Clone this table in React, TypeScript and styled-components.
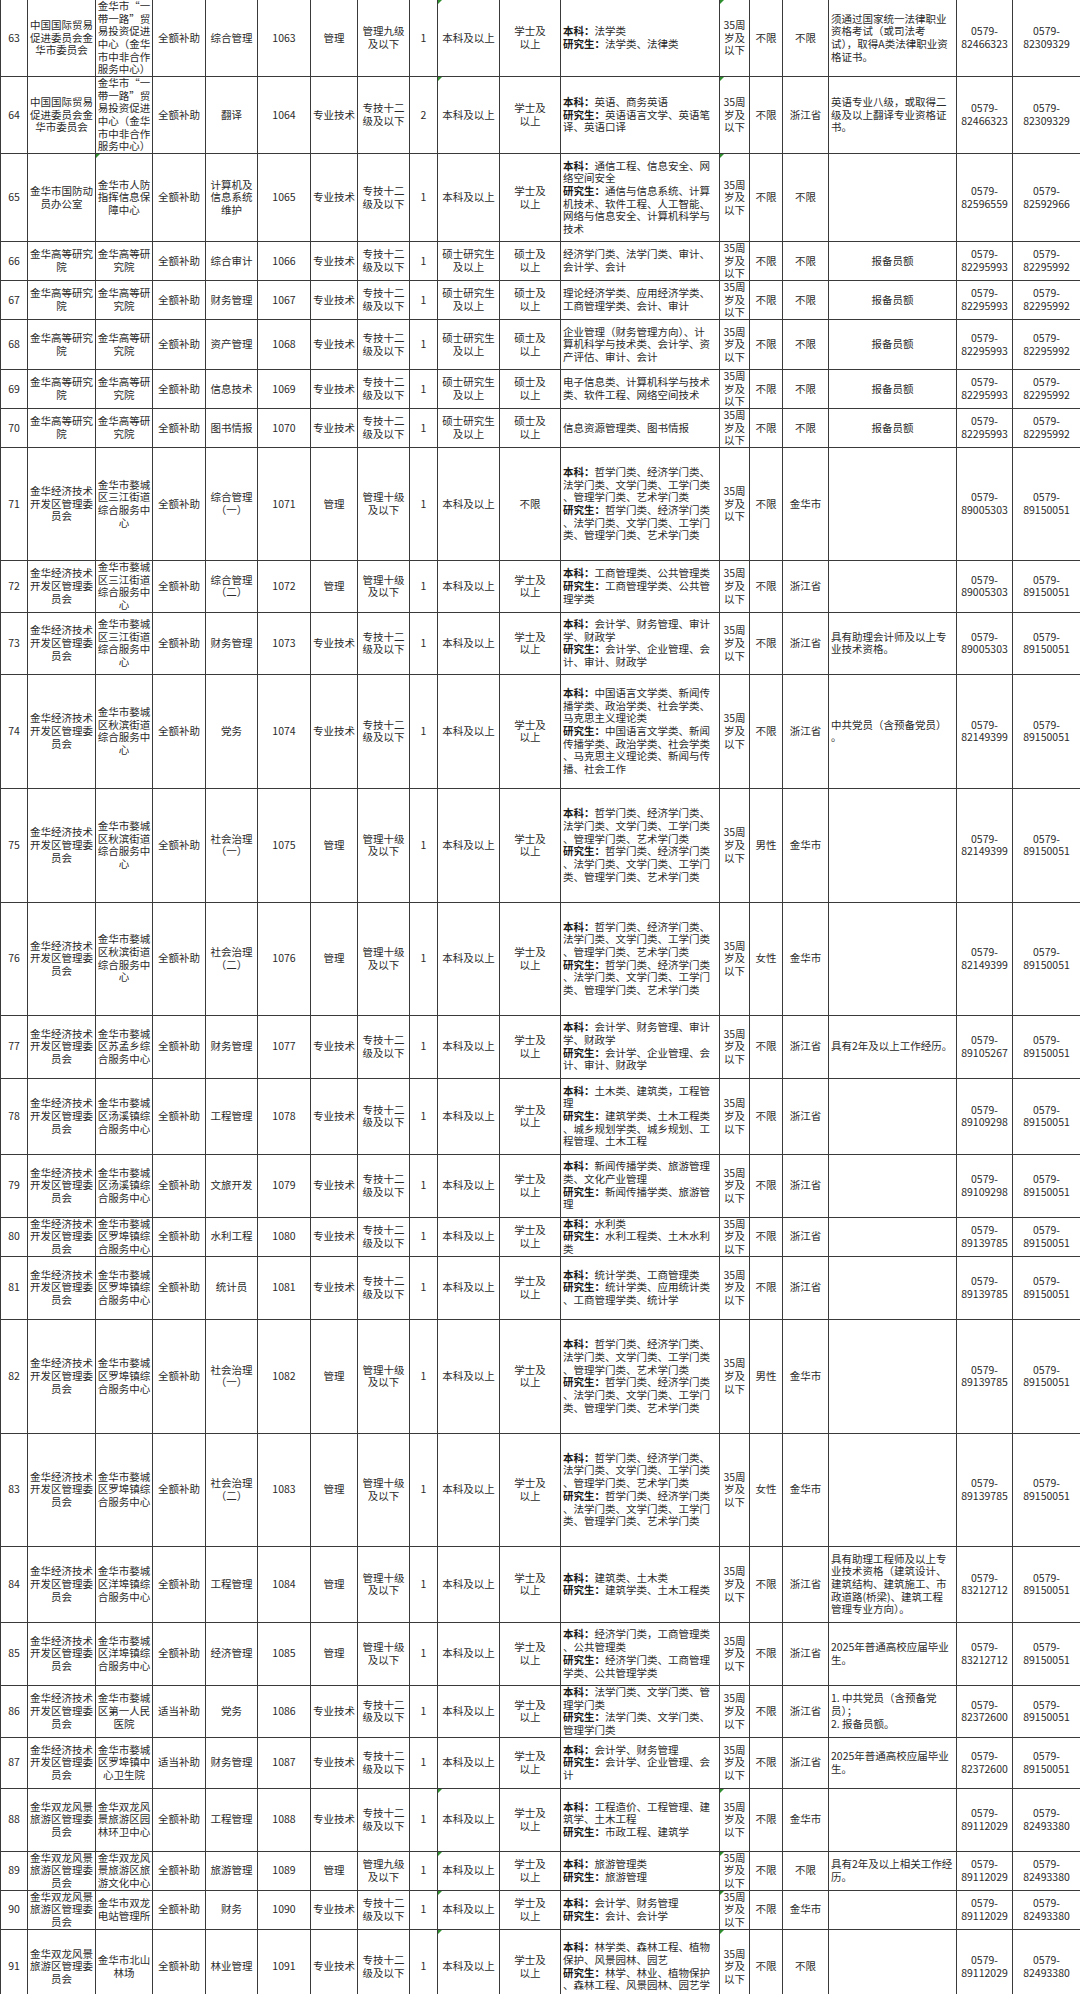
import React from 'react'
import styled, { createGlobalStyle } from 'styled-components'

const GlobalStyle = createGlobalStyle`
  html, body {
    margin: 0;
    padding: 0;
    background: #ffffff;
  }
  body {
    font-family: "Noto Sans CJK SC", "Noto Sans", sans-serif;
  }
`

const Sheet = styled.table`
  width: 1080px;
  table-layout: fixed;
  border-collapse: collapse;
  color: #2a2a2a;
  font-size: 10.5px;
  line-height: 12.67px;
`

type RowProps = { $h: number }

const Row = styled.tr<RowProps>`
  height: ${({ $h }: RowProps) => $h}px;
`

type CellProps = {
  $align: string
  $flag?: boolean
  $top?: boolean
}

const Cell = styled.td<CellProps>`
  position: relative;
  padding: ${({ $align }: CellProps) => ($align === 'left' ? '0 0 0 2px' : '0')};
  border: 1px solid #3a3a3a;
  ${({ $top }: CellProps) => $top && 'border-top: none;'}
  text-align: ${({ $align }: CellProps) => $align};
  vertical-align: middle;
  white-space: pre;

  &::before {
    content: '';
    display: ${({ $flag }: CellProps) => ($flag ? 'block' : 'none')};
    position: absolute;
    left: 0;
    top: 0;
    border-top: 4px solid #2f8f2f;
    border-right: 4px solid transparent;
  }
`

const Label = styled.b`
  font-weight: 700;
  color: #1a1a1a;
`

const widths = [27, 68, 57, 53, 52, 53, 47, 52, 28, 62, 61, 159, 30, 33, 46, 128, 56, 68]

const ORG_TRADE = '中国国际贸易\n促进委员会金\n华市委员会'
const UNIT_BR = '金华市“一\n带一路”贸\n易投资促进\n中心（金华\n市中非合作\n服务中心）'
const ORG_JH = '金华经济技术\n开发区管理委\n员会'
const ORG_SL = '金华双龙风景\n旅游区管理委\n员会'
const IAS = '金华高等研究\n院'
const IAS_U = '金华高等研\n究院'
const SJ = '金华市婺城\n区三江街道\n综合服务中\n心'
const QB = '金华市婺城\n区秋滨街道\n综合服务中\n心'
const SM = '金华市婺城\n区苏孟乡综\n合服务中心'
const TX = '金华市婺城\n区汤溪镇综\n合服务中心'
const LB = '金华市婺城\n区罗埠镇综\n合服务中心'
const YB = '金华市婺城\n区洋埠镇综\n合服务中心'
const AGE = '35周\n岁及\n以下'
const LV12 = '专技十二\n级及以下'
const LV10 = '管理十级\n及以下'
const LV9 = '管理九级\n及以下'
const BK = '本科及以上'
const XS = '学士及\n以上'
const SS = '硕士研究生\n及以上'
const SD = '硕士及\n以上'
const FULL = '全额补助'
const PART = '适当补助'
const TECH = '专业技术'
const MGMT = '管理'
const MAJ_ALL =
  '本科：哲学门类、经济学门类、\n法学门类、文学门类、工学门类\n、管理学门类、艺术学门类\n研究生：哲学门类、经济学门类\n、法学门类、文学门类、工学门\n类、管理学门类、艺术学门类'
const MAJ_ACC = '本科：会计学、财务管理、审计\n学、财政学\n研究生：会计学、企业管理、会\n计、审计、财政学'

const tel = (n: string) => `0579-\n${n}`

type Post = {
  h: number
  cells: string[]
  flags?: number[]
}

const posts: Post[] = [
  {
    h: 76, flags: [9, 12],
    cells: ['63', ORG_TRADE, UNIT_BR, FULL, '综合管理', '1063', MGMT, LV9, '1', BK, XS,
      '本科：法学类\n研究生：法学类、法律类', AGE, '不限', '不限',
      '须通过国家统一法律职业\n资格考试（或司法考\n试），取得A类法律职业资\n格证书。', tel('82466323'), tel('82309329')],
  },
  {
    h: 76, flags: [9, 12],
    cells: ['64', ORG_TRADE, UNIT_BR, FULL, '翻译', '1064', TECH, LV12, '2', BK, XS,
      '本科：英语、商务英语\n研究生：英语语言文学、英语笔\n译、英语口译', AGE, '不限', '浙江省',
      '英语专业八级，或取得二\n级及以上翻译专业资格证\n书。', tel('82466323'), tel('82309329')],
  },
  {
    h: 88, flags: [2, 12],
    cells: ['65', '金华市国防动\n员办公室', '金华市人防\n指挥信息保\n障中心', FULL, '计算机及\n信息系统\n维护', '1065', TECH, LV12, '1', BK, XS,
      '本科：通信工程、信息安全、网\n络空间安全\n研究生：通信与信息系统、计算\n机技术、软件工程、人工智能、\n网络与信息安全、计算机科学与\n技术',
      AGE, '不限', '不限', '', tel('82596559'), tel('82592966')],
  },
  {
    h: 38,
    cells: ['66', IAS, IAS_U, FULL, '综合审计', '1066', TECH, LV12, '1', SS, SD,
      '经济学门类、法学门类、审计、\n会计学、会计', AGE, '不限', '不限', '报备员额', tel('82295993'), tel('82295992')],
  },
  {
    h: 38,
    cells: ['67', IAS, IAS_U, FULL, '财务管理', '1067', TECH, LV12, '1', SS, SD,
      '理论经济学类、应用经济学类、\n工商管理学类、会计、审计', AGE, '不限', '不限', '报备员额', tel('82295993'), tel('82295992')],
  },
  {
    h: 50,
    cells: ['68', IAS, IAS_U, FULL, '资产管理', '1068', TECH, LV12, '1', SS, SD,
      '企业管理（财务管理方向）、计\n算机科学与技术类、会计学、资\n产评估、审计、会计', AGE, '不限', '不限', '报备员额', tel('82295993'), tel('82295992')],
  },
  {
    h: 38,
    cells: ['69', IAS, IAS_U, FULL, '信息技术', '1069', TECH, LV12, '1', SS, SD,
      '电子信息类、计算机科学与技术\n类、软件工程、网络空间技术', AGE, '不限', '不限', '报备员额', tel('82295993'), tel('82295992')],
  },
  {
    h: 38,
    cells: ['70', IAS, IAS_U, FULL, '图书情报', '1070', TECH, LV12, '1', SS, SD,
      '信息资源管理类、图书情报', AGE, '不限', '不限', '报备员额', tel('82295993'), tel('82295992')],
  },
  {
    h: 113,
    cells: ['71', ORG_JH, SJ, FULL, '综合管理\n（一）', '1071', MGMT, LV10, '1', BK, '不限',
      MAJ_ALL, AGE, '不限', '金华市', '', tel('89005303'), tel('89150051')],
  },
  {
    h: 51,
    cells: ['72', ORG_JH, SJ, FULL, '综合管理\n（二）', '1072', MGMT, LV10, '1', BK, XS,
      '本科：工商管理类、公共管理类\n研究生：工商管理学类、公共管\n理学类', AGE, '不限', '浙江省', '', tel('89005303'), tel('89150051')],
  },
  {
    h: 62,
    cells: ['73', ORG_JH, SJ, FULL, '财务管理', '1073', TECH, LV12, '1', BK, XS,
      MAJ_ACC, AGE, '不限', '浙江省', '具有助理会计师及以上专\n业技术资格。', tel('89005303'), tel('89150051')],
  },
  {
    h: 114,
    cells: ['74', ORG_JH, QB, FULL, '党务', '1074', TECH, LV12, '1', BK, XS,
      '本科：中国语言文学类、新闻传\n播学类、政治学类、社会学类、\n马克思主义理论类\n研究生：中国语言文学类、新闻\n传播学类、政治学类、社会学类\n、马克思主义理论类、新闻与传\n播、社会工作',
      AGE, '不限', '浙江省', '中共党员（含预备党员）\n。', tel('82149399'), tel('89150051')],
  },
  {
    h: 114,
    cells: ['75', ORG_JH, QB, FULL, '社会治理\n（一）', '1075', MGMT, LV10, '1', BK, XS,
      MAJ_ALL, AGE, '男性', '金华市', '', tel('82149399'), tel('89150051')],
  },
  {
    h: 113,
    cells: ['76', ORG_JH, QB, FULL, '社会治理\n（二）', '1076', MGMT, LV10, '1', BK, XS,
      MAJ_ALL, AGE, '女性', '金华市', '', tel('82149399'), tel('89150051')],
  },
  {
    h: 63,
    cells: ['77', ORG_JH, SM, FULL, '财务管理', '1077', TECH, LV12, '1', BK, XS,
      MAJ_ACC, AGE, '不限', '浙江省', '具有2年及以上工作经历。', tel('89105267'), tel('89150051')],
  },
  {
    h: 76,
    cells: ['78', ORG_JH, TX, FULL, '工程管理', '1078', TECH, LV12, '1', BK, XS,
      '本科：土木类、建筑类，工程管\n理\n研究生：建筑学类、土木工程类\n、城乡规划学类、城乡规划、工\n程管理、土木工程',
      AGE, '不限', '浙江省', '', tel('89109298'), tel('89150051')],
  },
  {
    h: 63,
    cells: ['79', ORG_JH, TX, FULL, '文旅开发', '1079', TECH, LV12, '1', BK, XS,
      '本科：新闻传播学类、旅游管理\n类、文化产业管理\n研究生：新闻传播学类、旅游管\n理',
      AGE, '不限', '浙江省', '', tel('89109298'), tel('89150051')],
  },
  {
    h: 38,
    cells: ['80', ORG_JH, LB, FULL, '水利工程', '1080', TECH, LV12, '1', BK, XS,
      '本科：水利类\n研究生：水利工程类、土木水利\n类', AGE, '不限', '浙江省', '', tel('89139785'), tel('89150051')],
  },
  {
    h: 63,
    cells: ['81', ORG_JH, LB, FULL, '统计员', '1081', TECH, LV12, '1', BK, XS,
      '本科：统计学类、工商管理类\n研究生：统计学类、应用统计类\n、工商管理学类、统计学', AGE, '不限', '浙江省', '', tel('89139785'), tel('89150051')],
  },
  {
    h: 114,
    cells: ['82', ORG_JH, LB, FULL, '社会治理\n（一）', '1082', MGMT, LV10, '1', BK, XS,
      MAJ_ALL, AGE, '男性', '金华市', '', tel('89139785'), tel('89150051')],
  },
  {
    h: 113,
    cells: ['83', ORG_JH, LB, FULL, '社会治理\n（二）', '1083', MGMT, LV10, '1', BK, XS,
      MAJ_ALL, AGE, '女性', '金华市', '', tel('89139785'), tel('89150051')],
  },
  {
    h: 76,
    cells: ['84', ORG_JH, YB, FULL, '工程管理', '1084', MGMT, LV10, '1', BK, XS,
      '本科：建筑类、土木类\n研究生：建筑学类、土木工程类', AGE, '不限', '浙江省',
      '具有助理工程师及以上专\n业技术资格（建筑设计、\n建筑结构、建筑施工、市\n政道路(桥梁)、建筑工程\n管理专业方向）。', tel('83212712'), tel('89150051')],
  },
  {
    h: 63,
    cells: ['85', ORG_JH, YB, FULL, '经济管理', '1085', MGMT, LV10, '1', BK, XS,
      '本科：经济学门类，工商管理类\n、公共管理类\n研究生：经济学门类、工商管理\n学类、公共管理学类',
      AGE, '不限', '浙江省', '2025年普通高校应届毕业\n生。', tel('83212712'), tel('89150051')],
  },
  {
    h: 50,
    cells: ['86', ORG_JH, '金华市婺城\n区第一人民\n医院', PART, '党务', '1086', TECH, LV12, '1', BK, XS,
      '本科：法学门类、文学门类、管\n理学门类\n研究生：法学门类、文学门类、\n管理学门类',
      AGE, '不限', '浙江省', '1. 中共党员（含预备党\n员）；\n2. 报备员额。', tel('82372600'), tel('89150051')],
  },
  {
    h: 51,
    cells: ['87', ORG_JH, '金华市婺城\n区罗埠镇中\n心卫生院', PART, '财务管理', '1087', TECH, LV12, '1', BK, XS,
      '本科：会计学、财务管理\n研究生：会计学、企业管理、会\n计', AGE, '不限', '浙江省',
      '2025年普通高校应届毕业\n生。', tel('82372600'), tel('89150051')],
  },
  {
    h: 63, flags: [9, 12],
    cells: ['88', ORG_SL, '金华双龙风\n景旅游区园\n林环卫中心', FULL, '工程管理', '1088', TECH, LV12, '1', BK, XS,
      '本科：工程造价、工程管理、建\n筑学、土木工程\n研究生：市政工程、建筑学', AGE, '不限', '金华市', '', tel('89112029'), tel('82493380')],
  },
  {
    h: 38, flags: [9, 12],
    cells: ['89', ORG_SL, '金华双龙风\n景旅游区旅\n游文化中心', FULL, '旅游管理', '1089', MGMT, LV9, '1', BK, XS,
      '本科：旅游管理类\n研究生：旅游管理', AGE, '不限', '不限',
      '具有2年及以上相关工作经\n历。', tel('89112029'), tel('82493380')],
  },
  {
    h: 38, flags: [9, 12],
    cells: ['90', ORG_SL, '金华市双龙\n电站管理所', FULL, '财务', '1090', TECH, LV12, '1', BK, XS,
      '本科：会计学、财务管理\n研究生：会计、会计学', AGE, '不限', '金华市', '', tel('89112029'), tel('82493380')],
  },
  {
    h: 75, flags: [9, 12],
    cells: ['91', ORG_SL, '金华市北山\n林场', FULL, '林业管理', '1091', TECH, LV12, '1', BK, XS,
      '本科：林学类、森林工程、植物\n保护、风景园林、园艺\n研究生：林学、林业、植物保护\n、森林工程、风景园林、园艺学',
      AGE, '不限', '不限', '', tel('89112029'), tel('82493380')],
  },
]

const Major = ({ text }: { text: string }) => (
  <>
    {text.split('\n').map((line, i) => {
      const m = line.match(/^(本科：|研究生：)(.*)$/)
      return (
        <React.Fragment key={i}>
          {i > 0 && '\n'}
          {m ? (
            <>
              <Label>{m[1]}</Label>
              {m[2]}
            </>
          ) : (
            line
          )}
        </React.Fragment>
      )
    })}
  </>
)

const alignFor = (col: number, text: string) => {
  if (col === 11) return 'left'
  if (col === 15 && text !== '报备员额') return 'left'
  return 'center'
}

const App = () => {
  return (
    <>
      <GlobalStyle />
      <Sheet lang="zh-CN">
        <colgroup>
          {widths.map((w, i) => (
            <col key={i} style={{ width: w }} />
          ))}
        </colgroup>
        <tbody>
          {posts.map((p, r) => (
            <Row key={p.cells[0]} $h={p.h}>
              {p.cells.map((c, i) => (
                <Cell
                  key={i}
                  $align={alignFor(i, c)}
                  $flag={p.flags?.includes(i)}
                  $top={r === 0}
                >
                  {i === 11 ? <Major text={c} /> : c}
                </Cell>
              ))}
            </Row>
          ))}
        </tbody>
      </Sheet>
    </>
  )
}

export default App
